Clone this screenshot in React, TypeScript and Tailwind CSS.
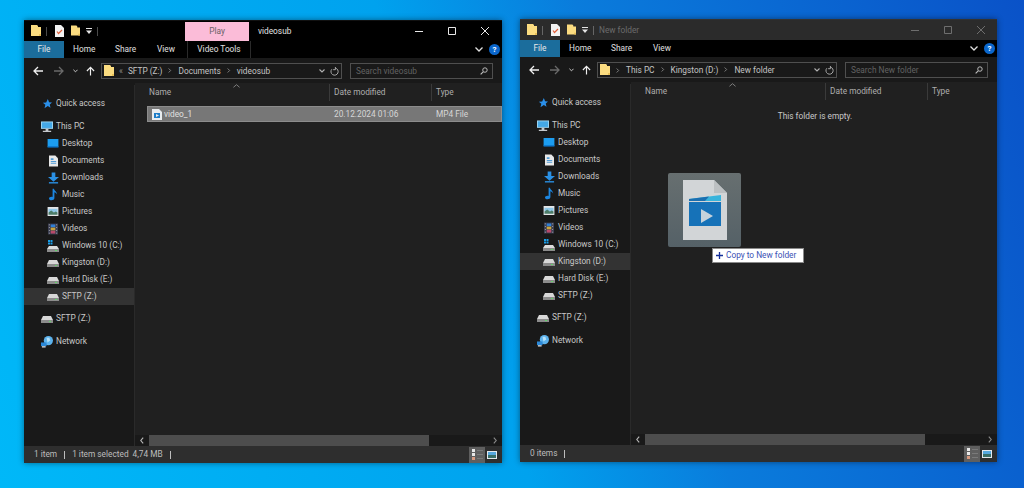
import type { ReactNode } from 'react';

type NavItem = {
  label: string;
  icon: ReactNode;
  selected?: boolean;
};

function Folder({ className }: { className?: string }) {
  return (
    <svg viewBox="0 0 10 12" className={className}>
      <path d="M0 0h6l1 1v1h3v9H0z" fill="#fbdc80" />
      <path d="M8 9h2v2H8z" fill="#e8bf58" />
    </svg>
  );
}

function Drive() {
  return (
    <svg viewBox="0 0 12 10" className="h-[10px] w-[12px] shrink-0">
      <path d="M2 2h8l2 4H0z" fill="#d8d8d8" />
      <path d="M0 6h12v3H0z" fill="#8c8c8c" />
      <path d="M8 7h2v1H8z" fill="#62d36a" />
    </svg>
  );
}

function WinDrive() {
  return (
    <svg viewBox="0 0 12 12" className="h-[12px] w-[12px] shrink-0">
      <path d="M1 0h2v2H1zM3.500 0h2v2h-2zM1 2.500h2v2H1zM3.500 2.500h2v2h-2z" fill="#1a9ee8" />
      <path d="M2 6h8l2 3H0z" fill="#dcdcdc" />
      <path d="M0 9h12v3H0z" fill="#8c8c8c" />
      <path d="M8 10h2v1H8z" fill="#62d36a" />
    </svg>
  );
}

function Star() {
  return (
    <svg viewBox="0 0 12 12" className="h-[10px] w-[10px] shrink-0">
      <path d="M7 0l1.500 4 3.500.3-2.700 2.400.9 3.800L7 8.500 3 11l1-4L1 4.500l4-.3z" fill="#2b8fe8" />
    </svg>
  );
}

function ThisPc() {
  return (
    <svg viewBox="0 0 13 12" className="h-[12px] w-[12px] shrink-0">
      <path d="M0 0h13v8H0z" fill="#9fd6f2" />
      <path d="M1 1h11v6H1z" fill="#44a8e6" />
      <path d="M5 8h3v2H5zM2 10h9v1.500H2z" fill="#c4c8cc" />
    </svg>
  );
}

function Desktop() {
  return (
    <svg viewBox="0 0 12 10" className="h-[9px] w-[12px] shrink-0">
      <path d="M0 0h12v9H0z" fill="#1c9df0" />
      <path d="M0 8h12v1.500H0z" fill="#0b74c8" />
    </svg>
  );
}

function Documents() {
  return (
    <svg viewBox="0 0 10 12" className="h-[12px] w-[9px] shrink-0">
      <path d="M0 0h7l3 3v9H0z" fill="#e8e8e8" />
      <path d="M2 3h3v2H2zM2 6h6v1H2zM2 8h6v1H2z" fill="#4f9ad6" />
    </svg>
  );
}

function Downloads() {
  return (
    <svg viewBox="0 0 12 12" className="h-[12px] w-[11px] shrink-0">
      <path d="M4 0h4v5h4l-6 5-6-5h4z" fill="#2a90e4" />
      <path d="M1 10.500h10V12H1z" fill="#2a90e4" />
    </svg>
  );
}

function Music() {
  return (
    <svg viewBox="0 0 10 13" className="h-[13px] w-[9px] shrink-0">
      <path d="M4 0h1.500c.4 2.500 3.500 3 3.500 6.500-.8-1.500-2-2.200-3-2.500v6.500C6 12 4.500 13 2.800 13S0 12.200 0 11s1.300-2 2.800-2c.5 0 .9.100 1.200.2z" fill="#1c86e0" />
    </svg>
  );
}

function Pictures() {
  return (
    <svg viewBox="0 0 12 10" className="h-[9px] w-[12px] shrink-0">
      <path d="M0 0h12v10H0z" fill="#e4e6e8" />
      <path d="M1 2h10v4H1z" fill="#8fc8ea" />
      <path d="M1 6l3-2 3 2 2-1 2 1v2.500H1z" fill="#4c7d6a" />
    </svg>
  );
}

function Videos() {
  return (
    <svg viewBox="0 0 11 12" className="h-[12px] w-[10px] shrink-0">
      <path d="M0 0h11v12H0z" fill="#3c3f52" />
      <path d="M3 1h5v3H3z" fill="#2f7fd6" />
      <path d="M3 4.500h5v3H3z" fill="#c9a33c" />
      <path d="M3 8h5v3H3z" fill="#b8496a" />
      <path d="M1 1h1v1H1zM1 4h1v1H1zM1 7h1v1H1zM1 10h1v1H1zM9 1h1v1H9zM9 4h1v1H9zM9 7h1v1H9zM9 10h1v1H9z" fill="#c8c8c8" />
    </svg>
  );
}

function Network() {
  return (
    <svg viewBox="0 0 13 13" className="h-[12px] w-[12px] shrink-0">
      <circle cx="8" cy="5" r="5" fill="#5cb2ec" />
      <path d="M6 2h3l1 3-3 2z" fill="#b5e0f7" />
      <path d="M0 7h6v4H0z" fill="#2a88d8" />
      <path d="M1 11h4v1.500H1z" fill="#d4d8dc" />
    </svg>
  );
}

function NavRow({ item, indent }: { item: NavItem; indent?: boolean }) {
  return (
    <div
      className={`flex h-[17px] items-center whitespace-nowrap ${indent ? 'pl-[23px]' : 'pl-[17px]'} ${item.selected ? 'bg-[#333333]' : ''}`}
    >
      <span className="mr-[3px] flex w-[12px] shrink-0 items-center justify-center">{item.icon}</span>
      <span className="text-[#c8c8c8]">{item.label}</span>
    </div>
  );
}

function Chevron({ dim }: { dim?: boolean }) {
  return (
    <svg viewBox="0 0 6 8" className="mx-[6px] h-[7px] w-[4px] shrink-0">
      <path d="M1 1l3 3-3 3" fill="none" stroke={dim ? '#666666' : '#8c8c8c'} strokeWidth="1.300" />
    </svg>
  );
}

function WindowButtons({ dim }: { dim?: boolean }) {
  const color = dim ? '#6e6e6e' : '#e8e8e8';
  return (
    <div className="flex items-center">
      <span className="flex h-[20px] w-[32px] items-center justify-center">
        <svg viewBox="0 0 10 10" className="h-[10px] w-[10px]">
          <path d="M1 5.500h8" stroke={color} strokeWidth="1" />
        </svg>
      </span>
      <span className="flex h-[20px] w-[33px] items-center justify-center">
        <svg viewBox="0 0 10 10" className="h-[10px] w-[10px]">
          <path d="M1.500 1.500h7v7h-7z" fill="none" stroke={color} strokeWidth="1" />
        </svg>
      </span>
      <span className="flex h-[20px] w-[33px] items-center justify-center">
        <svg viewBox="0 0 10 10" className="h-[10px] w-[10px]">
          <path d="M1 1l8 8M9 1l-8 8" stroke={color} strokeWidth="1" />
        </svg>
      </span>
    </div>
  );
}

function QuickAccessBar({ dim }: { dim?: boolean }) {
  const sep = dim ? 'bg-[#666666]' : 'bg-[#4a4a4a]';
  return (
    <div className="flex items-center pl-[7px]">
      <Folder className="h-[12px] w-[10px]" />
      <span className={`ml-[5px] h-[9px] w-[1px] ${sep}`} />
      <svg viewBox="0 0 9 12" className="ml-[8px] h-[12px] w-[9px]">
        <path d="M0 0h6l3 3v9H0z" fill="#f2f2f2" />
        <path d="M2 6.500l1.500 2L7 5" fill="none" stroke="#e0603c" strokeWidth="1.200" />
      </svg>
      <Folder className="ml-[7px] h-[12px] w-[9px]" />
      <svg viewBox="0 0 6 6" className="ml-[6px] h-[6px] w-[6px]">
        <path d="M0 0h6v1H0zM0 2.500h6L3 6z" fill="#e4e4e4" />
      </svg>
      <span className={`ml-[5px] h-[9px] w-[1px] ${sep}`} />
    </div>
  );
}

function HelpButtons() {
  return (
    <div className="ml-auto flex items-center pr-[2px]">
      <svg viewBox="0 0 8 5" className="h-[5px] w-[8px]">
        <path d="M.5.500L4 4 7.500.5" fill="none" stroke="#e0e0e0" strokeWidth="1.300" />
      </svg>
      <span className="ml-[6px] flex h-[11px] w-[11px] items-center justify-center rounded-full bg-[#0a66cc] text-[8px] font-bold text-white">
        ?
      </span>
    </div>
  );
}

function AddressBar({ crumbs, search, prefix }: { crumbs: string[]; search: string; prefix?: boolean }) {
  return (
    <div className="flex h-[27px] shrink-0 items-center whitespace-nowrap bg-[#191919] pb-[1px] pr-[9px]">
      <svg viewBox="0 0 10 10" className="ml-[9px] h-[10px] w-[10px]">
        <path d="M5 1L1 5l4 4M1 5h9" fill="none" stroke="#f0f0f0" strokeWidth="1.300" />
      </svg>
      <svg viewBox="0 0 10 10" className="ml-[11px] h-[10px] w-[10px]">
        <path d="M5 1l4 4-4 4M9 5H0" fill="none" stroke="#6a6a6a" strokeWidth="1.300" />
      </svg>
      <svg viewBox="0 0 6 4" className="ml-[9px] h-[4px] w-[5px]">
        <path d="M.5.500L3 3 5.500.5" fill="none" stroke="#d8d8d8" strokeWidth="1.100" />
      </svg>
      <svg viewBox="0 0 10 10" className="ml-[8px] h-[10px] w-[9px]">
        <path d="M1 5l4-4 4 4M5 1v9" fill="none" stroke="#f0f0f0" strokeWidth="1.300" />
      </svg>
      <div className="ml-[6px] flex h-[16px] min-w-0 flex-1 items-center border border-[#4f4f4f] pl-[2px]">
        <Folder className="h-[12px] w-[10px] shrink-0" />
        {prefix ? (
          <span className="ml-[5px] mr-[5px] text-[#8c8c8c]">«</span>
        ) : (
          <Chevron />
        )}
        {crumbs.map((crumb, i) => (
          <span key={crumb} className="flex items-center">
            {i > 0 && <Chevron />}
            <span className="text-[#c4c4c4]">{crumb}</span>
          </span>
        ))}
        <svg viewBox="0 0 6 4" className="ml-auto h-[4px] w-[6px]">
          <path d="M.5.500L3 3 5.500.5" fill="none" stroke="#b0b0b0" strokeWidth="1.100" />
        </svg>
        <svg viewBox="0 0 10 10" className="ml-[5px] mr-[2px] h-[9px] w-[9px]">
          <path d="M6 1.200A4 4 0 1 1 2 2.500M6 0v3H3.500" fill="none" stroke="#a8a8a8" strokeWidth="1.100" />
        </svg>
      </div>
      <div className="ml-[8px] flex h-[16px] w-[143px] shrink-0 items-center justify-between border border-[#4f4f4f] pl-[5px] pr-[4px]">
        <span className="text-[#626262]">{search}</span>
        <svg viewBox="0 0 10 10" className="h-[8px] w-[8px]">
          <circle cx="6.200" cy="3.800" r="2.800" fill="none" stroke="#c0c0c0" strokeWidth="1.200" />
          <path d="M4 6L.8 9.200" stroke="#c0c0c0" strokeWidth="1.400" />
        </svg>
      </div>
    </div>
  );
}

function ColumnHeader() {
  return (
    <div className="relative -mt-[2px] flex h-[18px] shrink-0 items-center whitespace-nowrap bg-[#202020]">
      <span className="w-[194px] pl-[14px] text-[#aeaeae]">Name</span>
      <span className="h-[17px] w-[1px] bg-[#3a3a3a]" />
      <span className="w-[101px] pl-[4px] text-[#aeaeae]">Date modified</span>
      <span className="h-[17px] w-[1px] bg-[#3a3a3a]" />
      <span className="pl-[4px] text-[#aeaeae]">Type</span>
      <svg viewBox="0 0 8 4" className="absolute left-[98px] top-[1px] h-[4px] w-[7px]">
        <path d="M.5 3.500L4 .5l3.500 3" fill="none" stroke="#8a8a8a" strokeWidth="1" />
      </svg>
    </div>
  );
}

function ScrollBar() {
  return (
    <div className="flex h-[11px] shrink-0 items-center bg-[#191919]">
      <span className="flex h-full w-[14px] items-center justify-center">
        <svg viewBox="0 0 5 8" className="h-[7px] w-[4px]">
          <path d="M4 .5L1 4l3 3.500" fill="none" stroke="#b8b8b8" strokeWidth="1.400" />
        </svg>
      </span>
      <span className="h-full w-[280px] bg-[#4d4d4d]" />
      <span className="ml-auto flex h-full w-[14px] items-center justify-center">
        <svg viewBox="0 0 5 8" className="h-[7px] w-[4px]">
          <path d="M1 .5L4 4 1 7.500" fill="none" stroke="#8a8a8a" strokeWidth="1.400" />
        </svg>
      </span>
    </div>
  );
}

function ViewButtons() {
  return (
    <div className="ml-auto flex h-full items-center pr-[5px]">
      <span className="flex h-[16px] w-[16px] items-center justify-center gap-[2px] bg-[#5f5f5f]">
        <span className="flex flex-col gap-[1px]">
          <span className="h-[3px] w-[3px] bg-[#e8e8e8]" />
          <span className="h-[3px] w-[3px] bg-[#e8e8e8]" />
          <span className="h-[3px] w-[3px] bg-[#d89a80]" />
        </span>
        <span className="flex flex-col gap-[3px]">
          <span className="h-[1px] w-[6px] bg-[#7a7a7a]" />
          <span className="h-[1px] w-[6px] bg-[#7a7a7a]" />
          <span className="h-[1px] w-[6px] bg-[#7a7a7a]" />
        </span>
      </span>
      <svg viewBox="0 0 10 8" className="ml-[2px] h-[8px] w-[10px]">
        <path d="M0 0h10v8H0z" fill="#e4e8ec" />
        <path d="M1 1h8v3H1z" fill="#56a8de" />
        <path d="M1 4h8v3H1z" fill="#3a6f68" />
      </svg>
    </div>
  );
}

function navFor(selected: string): NavItem[] {
  const drive = (label: string, icon: ReactNode): NavItem => ({ label, icon, selected: label === selected });
  return [
    { label: 'Desktop', icon: <Desktop /> },
    { label: 'Documents', icon: <Documents /> },
    { label: 'Downloads', icon: <Downloads /> },
    { label: 'Music', icon: <Music /> },
    { label: 'Pictures', icon: <Pictures /> },
    { label: 'Videos', icon: <Videos /> },
    drive('Windows 10 (C:)', <WinDrive />),
    drive('Kingston (D:)', <Drive />),
    drive('Hard Disk (E:)', <Drive />),
    drive('SFTP (Z:)', <Drive />),
  ];
}

function Sidebar({ selected }: { selected: string }) {
  return (
    <div className="w-[110px] shrink-0 bg-[#191919] pt-[10px]">
      <NavRow item={{ label: 'Quick access', icon: <Star /> }} />
      <div className="mt-[6px]">
        <NavRow item={{ label: 'This PC', icon: <ThisPc /> }} />
      </div>
      {navFor(selected).map((item) => (
        <NavRow key={item.label} item={item} indent />
      ))}
      <div className="mt-[5px]">
        <NavRow item={{ label: 'SFTP (Z:)', icon: <Drive /> }} />
      </div>
      <div className="mt-[6px]">
        <NavRow item={{ label: 'Network', icon: <Network /> }} />
      </div>
    </div>
  );
}

function DragImage() {
  return (
    <div className="absolute left-[37px] top-[89px]">
      <div className="flex h-[74px] w-[73px] items-center justify-center rounded-[2px] bg-[linear-gradient(to_bottom,#676f70,#556167)]">
        <svg viewBox="0 0 44 60" className="h-[60px] w-[44px]">
          <path d="M0 0h31l13 13v47H0z" fill="#d2d5d7" />
          <path d="M31 0l13 13H31z" fill="#bcc0c2" />
          <path d="M6 19l32-4v6H6z" fill="#38b4dc" />
          <path d="M6 19l20-2.500-4 4.500H6z" fill="#1b6fb0" />
          <path d="M6 22h32v24H6z" fill="#1672b8" />
          <path d="M18 29l12 7-12 7z" fill="#c6d3db" />
        </svg>
      </div>
      <div className="absolute left-[44px] top-[75px] flex h-[15px] w-[92px] items-center whitespace-nowrap border border-[#8a8a8a] bg-white pl-[3px]">
        <svg viewBox="0 0 8 8" className="h-[7px] w-[7px]">
          <path d="M4 0v8M0 4h8" stroke="#16309a" strokeWidth="1.500" />
        </svg>
        <span className="ml-[3px] text-[#3a50b4]">Copy to New folder</span>
      </div>
    </div>
  );
}

export default function App() {
  return (
    <div className="relative h-[488px] w-[1024px] overflow-hidden bg-[linear-gradient(72deg,#00b8f8_0%,#00a2ee_45%,#0a7cdc_62%,#0a52c8_100%)] font-['Roboto','Noto_Sans',sans-serif] text-[8.3px] leading-none">
      {/* Left window */}
      <div className="absolute left-[24px] top-[20px] flex h-[443px] w-[478px] flex-col border-t border-[#111] bg-[#202020] shadow-[0_0_6px_rgba(0,0,0,0.45)]">
        <div className="flex h-[20px] shrink-0 items-center bg-black">
          <QuickAccessBar />
          <div className="ml-[87px] flex h-[19px] w-[64px] items-center justify-center self-end bg-[#fbbcd8] text-[#6a6066]">
            Play
          </div>
          <span className="ml-[9px] text-[#e4e4e4]">videosub</span>
          <div className="ml-auto pr-[1px]">
            <WindowButtons />
          </div>
        </div>
        <div className="flex h-[17px] shrink-0 items-center bg-black">
          <div className="flex h-full w-[40px] items-center justify-center bg-[#1b6d9c] text-[#e8e8e8]">File</div>
          <span className="ml-[9px] w-[42px] text-[#e0e0e0]">Home</span>
          <span className="w-[42px] text-[#e0e0e0]">Share</span>
          <span className="w-[30px] text-[#e0e0e0]">View</span>
          <div className="flex h-full w-[64px] items-center justify-center border-x border-[#2a2a2a] text-[#e0e0e0]">
            Video Tools
          </div>
          <HelpButtons />
        </div>
        <AddressBar prefix crumbs={['SFTP (Z:)', 'Documents', 'videosub']} search="Search videosub" />
        <div className="flex min-h-0 flex-1">
          <Sidebar selected="SFTP (Z:)" />
          <div className="flex min-w-0 flex-1 flex-col border-l border-[#2a2a2a]">
            <ColumnHeader />
            <div className="ml-[12px] mt-[5px] flex h-[16px] shrink-0 items-center whitespace-nowrap border border-[#8c8c8c] bg-[#777777] text-[#d6d6d6]">
              <svg viewBox="0 0 10 11" className="ml-[4px] h-[11px] w-[10px] shrink-0">
                <path d="M0 0h7l3 3v8H0z" fill="#e8ecef" />
                <path d="M2 4h6v5H2z" fill="#1b7cc8" />
                <path d="M4 5l3 1.500L4 8z" fill="#e8ecef" />
              </svg>
              <span className="ml-[2px] w-[170px] text-[#e0e0e0]">video_1</span>
              <span className="w-[102px]">20.12.2024 01:06</span>
              <span>MP4 File</span>
            </div>
            <div className="flex-1" />
            <ScrollBar />
          </div>
        </div>
        <div className="flex h-[17px] shrink-0 items-center whitespace-nowrap bg-[#2e2e2e] pl-[10px] text-[#bdbdbd]">
          <span>1 item</span>
          <span className="mx-[7px] h-[8px] w-[1px] bg-[#bdbdbd]" />
          <span>1 item selected</span>
          <span className="ml-[4px]">4,74 MB</span>
          <span className="ml-[7px] h-[8px] w-[1px] bg-[#bdbdbd]" />
          <ViewButtons />
        </div>
      </div>

      {/* Right window */}
      <div className="absolute left-[520px] top-[19px] flex h-[443px] w-[477px] flex-col border-t border-[#333] bg-[#202020] shadow-[0_0_6px_rgba(0,0,0,0.45)]">
        <div className="flex h-[20px] shrink-0 items-center bg-[#2b2b2b]">
          <QuickAccessBar dim />
          <span className="ml-[5px] text-[#6c6c6c]">New folder</span>
          <div className="ml-auto">
            <WindowButtons dim />
          </div>
        </div>
        <div className="flex h-[17px] shrink-0 items-center bg-black">
          <div className="flex h-full w-[40px] items-center justify-center bg-[#1b6d9c] text-[#e8e8e8]">File</div>
          <span className="ml-[9px] w-[42px] text-[#e0e0e0]">Home</span>
          <span className="w-[42px] text-[#e0e0e0]">Share</span>
          <span className="w-[30px] text-[#e0e0e0]">View</span>
          <HelpButtons />
        </div>
        <AddressBar crumbs={['This PC', 'Kingston (D:)', 'New folder']} search="Search New folder" />
        <div className="flex min-h-0 flex-1">
          <Sidebar selected="Kingston (D:)" />
          <div className="relative flex min-w-0 flex-1 flex-col border-l border-[#2a2a2a]">
            <ColumnHeader />
            <div className="whitespace-nowrap pl-[2px] pt-[12px] text-center text-[#c8c8c8]">This folder is empty.</div>
            <div className="flex-1" />
            <ScrollBar />
            <DragImage />
          </div>
        </div>
        <div className="flex h-[17px] shrink-0 items-center whitespace-nowrap bg-[#2e2e2e] pl-[10px] text-[#bdbdbd]">
          <span>0 items</span>
          <span className="ml-[7px] h-[8px] w-[1px] bg-[#bdbdbd]" />
          <ViewButtons />
        </div>
      </div>
    </div>
  );
}
